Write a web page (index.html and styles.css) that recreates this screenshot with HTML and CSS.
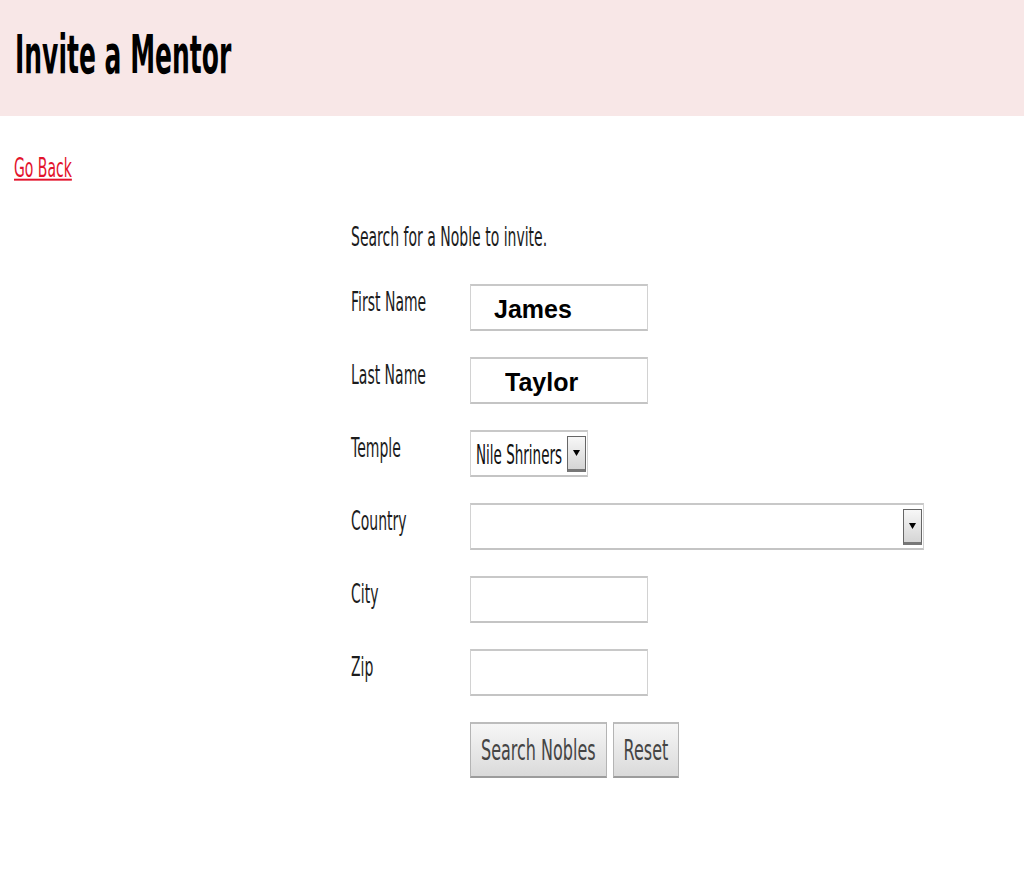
FILE: index.html
```html
<!DOCTYPE html>
<html lang="en">
<head>
    <meta charset="UTF-8">
    <meta name="viewport" content="width=device-width, initial-scale=1.0">
    <title>Invite a Mentor</title>
    <link rel="stylesheet" href="styles.css">
</head>
<body>
    <header class="page-head">
        <h1 class="page-title"><span class="tall tall-title">Invite a Mentor</span></h1>
    </header>

    <main class="content">
        <div class="back-row">
            <a href="#" class="back-link"><span class="tall">Go Back</span></a>
        </div>

        <form class="search-form">
            <p class="intro"><span class="tall">Search for a Noble to invite.</span></p>

            <div class="form-grid">
                <label class="field-label" for="first-name"><span class="tall">First Name</span></label>
                <div><input type="text" id="first-name" class="field field-first" value="James"></div>

                <label class="field-label" for="last-name"><span class="tall">Last Name</span></label>
                <div><input type="text" id="last-name" class="field field-last" value="Taylor"></div>

                <label class="field-label"><span class="tall">Temple</span></label>
                <div>
                    <div class="select select-temple">
                        <span class="tall select-text">Nile Shriners</span>
                        <span class="select-arrow"><svg width="7" height="6" viewBox="0 0 7 6"><polygon points="0,0 7,0 3.5,6" fill="#000"/></svg></span>
                    </div>
                </div>

                <label class="field-label"><span class="tall">Country</span></label>
                <div>
                    <div class="select select-country">
                        <span class="tall select-text"></span>
                        <span class="select-arrow"><svg width="7" height="6" viewBox="0 0 7 6"><polygon points="0,0 7,0 3.5,6" fill="#000"/></svg></span>
                    </div>
                </div>

                <label class="field-label" for="city"><span class="tall">City</span></label>
                <div><input type="text" id="city" class="field"></div>

                <label class="field-label" for="zip"><span class="tall">Zip</span></label>
                <div><input type="text" id="zip" class="field"></div>

                <div></div>
                <div class="actions">
                    <button type="submit" class="btn"><span class="tall tall-btn">Search Nobles</span></button>
                    <button type="reset" class="btn"><span class="tall tall-btn">Reset</span></button>
                </div>
            </div>
        </form>
    </main>
</body>
</html>
```

FILE: styles.css
```css
/* screenshot is stretched vertically, so text gets scaled on Y */
body {
    font-family: "DejaVu Sans", Verdana, sans-serif;
    font-size: 14px;
    margin: 0;
    padding: 0;
    background-color: #fff;
    color: #1c1c1c;
}

.tall {
    display: inline-block;
    line-height: 14px;
    white-space: nowrap;
    transform: scaleY(1.95);
}

.page-head {
    background-color: #f8e7e7;
    height: 116px;
    box-sizing: border-box;
    padding: 0 14px 8px 15px;
    display: flex;
    align-items: center;
}

.page-title {
    margin: 0;
    font-size: 25px;
    font-weight: bold;
    line-height: 25px;
    color: #000;
}

.tall-title {
    line-height: 25px;
    transform: scaleY(2.15);
}

.content {
    padding: 0 14px;
}

.back-row {
    margin-top: 44px;
    height: 14px;
    line-height: 14px;
}

.back-link {
    color: #e3132c;
    text-decoration: none;
}

.back-link .tall {
    text-decoration: underline;
}

.search-form {
    margin-left: 337px;
}

.intro {
    margin: 55px 0 0;
    line-height: 14px;
    height: 14px;
}

.form-grid {
    margin-top: 41px;
    display: grid;
    grid-template-columns: 119px auto;
    row-gap: 26px;
    align-items: start;
}

.field-label {
    padding-top: 10px;
    line-height: 14px;
}

.field {
    width: 178px;
    height: 47px;
    box-sizing: border-box;
    margin: 0;
    border: 1px solid #d2d2d2;
    border-top: 2px solid #c8c8c8;
    border-bottom: 2px solid #c4c4c4;
    background: #fff;
    font-family: "Liberation Sans", Arial, sans-serif;
    font-size: 25px;
    font-weight: bold;
    color: #000;
    padding: 4px 4px 0;
    outline: none;
}

.field-first {
    padding-left: 23px;
}

.field-last {
    padding-left: 34px;
}

.select {
    display: inline-flex;
    align-items: center;
    justify-content: space-between;
    gap: 5px;
    height: 47px;
    box-sizing: border-box;
    padding: 4px 1px 3px 5px;
    border: 1px solid #d2d2d2;
    border-top: 2px solid #c8c8c8;
    border-bottom: 2px solid #c4c4c4;
    background: #fff;
}

.select-text {
    font-size: 13.5px;
    color: #111;
    transform: scaleY(2);
}

.select-country {
    width: 454px;
}

.select-arrow {
    align-self: stretch;
    flex-shrink: 0;
    width: 19px;
    box-sizing: border-box;
    border: 1px solid #666;
    border-bottom: 3px solid #777;
    background: linear-gradient(#f7f7f7, #d5d5d5);
    display: flex;
    align-items: center;
    justify-content: center;
}

.actions {
    display: flex;
    gap: 6px;
}

.btn {
    height: 56px;
    padding: 0 10px;
    font-family: "DejaVu Sans", Verdana, sans-serif;
    font-size: 16px;
    color: #444;
    border: 1px solid #b4b4b4;
    border-top: 2px solid #bcbcbc;
    border-bottom: 2px solid #9c9c9c;
    background: linear-gradient(#f6f6f6, #dadada);
    cursor: pointer;
}

.tall-btn {
    line-height: 16px;
    transform: scaleY(1.75);
}
```
